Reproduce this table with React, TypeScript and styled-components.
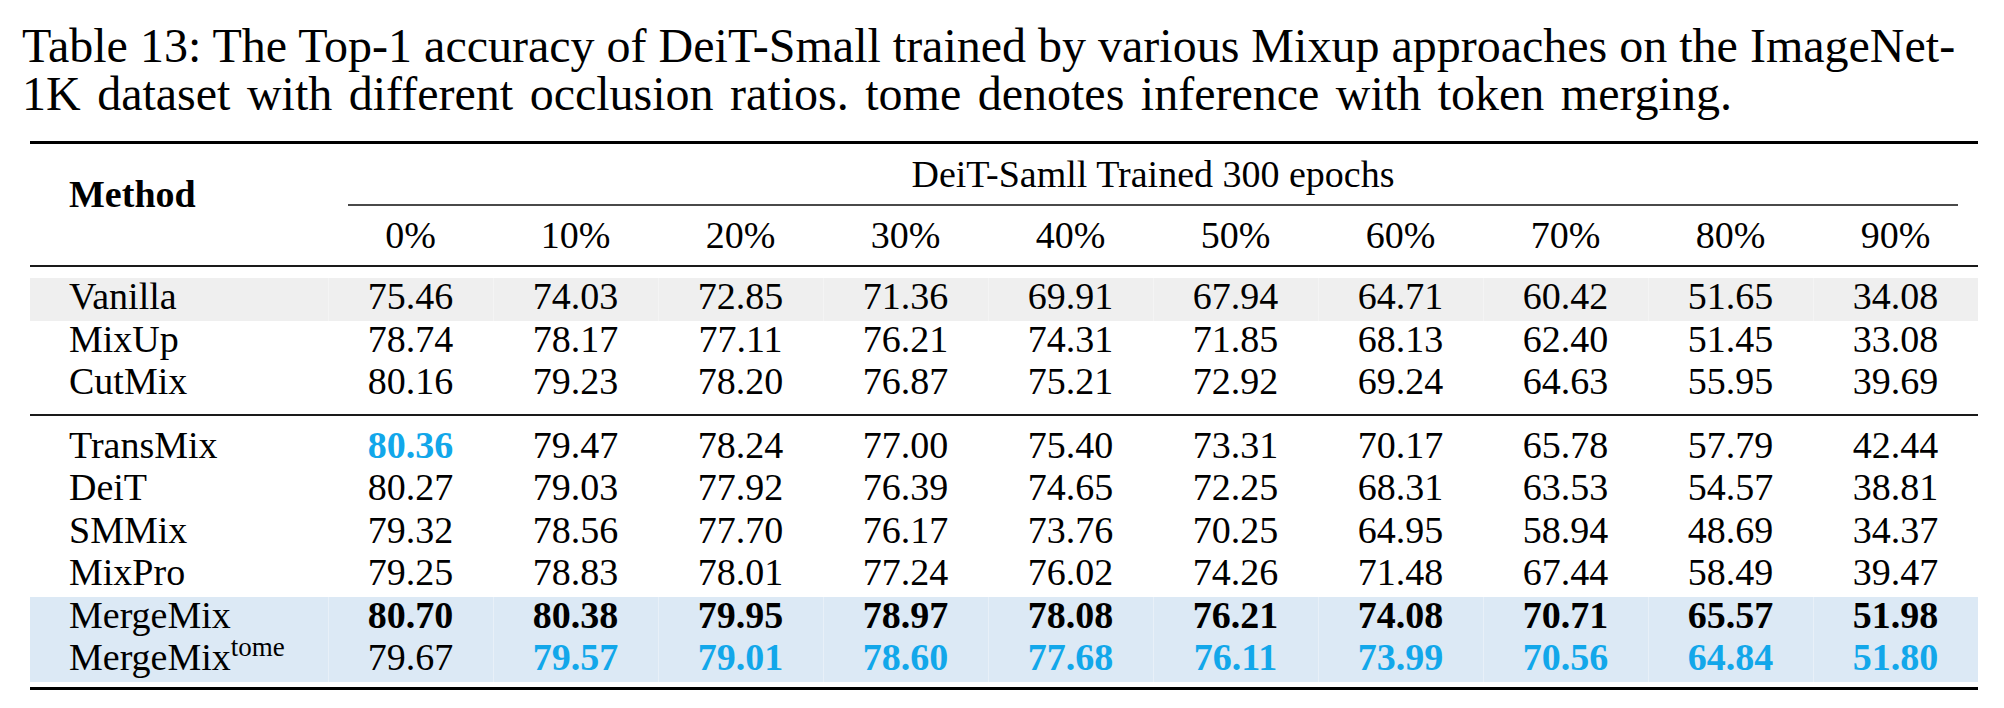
import React from "react";
import styled, { createGlobalStyle } from "styled-components";

const GlobalStyle = createGlobalStyle`
  html, body {
    margin: 0;
    padding: 0;
    background: #ffffff;
  }
  body {
    font-family: "Liberation Serif", "Times New Roman", serif;
    color: #000000;
  }
`;

const Page = styled.div`
  width: 2004px;
  height: 708px;
  overflow: hidden;
  padding-top: 22px;
  box-sizing: border-box;
`;

const Caption = styled.div`
  width: 1933px;
  margin-left: 22px;
  font-size: 48px;
  line-height: 48px;
`;

const CaptionLine = styled.div<{ $justify?: boolean; $spacing?: number }>`
  white-space: nowrap;
  word-spacing: ${({ $spacing }) => $spacing || 0}px;
  text-align: ${({ $justify }) => ($justify ? "justify" : "left")};
  text-align-last: ${({ $justify }) => ($justify ? "justify" : "left")};
`;

const Table = styled.div`
  width: 1948px;
  margin: 23px 0 0 30px;
  font-size: 38px;
`;

const Rule = styled.div<{ $h: number; $color?: string }>`
  height: ${({ $h }) => $h}px;
  background: ${({ $color }) => $color || "#000"};
`;

const Gap = styled.div<{ $h: number }>`
  height: ${({ $h }) => $h}px;
`;

const Header = styled.div`
  display: grid;
  grid-template-columns: 298px 1650px;
  grid-template-rows: 60px 2px 59px;
`;

const MethodHead = styled.div`
  grid-row: 1 / 4;
  font-weight: bold;
  line-height: 42px;
  padding: 29px 0 0 39px;
`;

const GroupHead = styled.div`
  text-align: center;
  line-height: 60px;
`;

const CMidRule = styled.div`
  grid-column: 2;
  margin: 0 20px;
  background: #4a4a4a;
`;

const Cols = styled.div`
  grid-column: 2;
  display: grid;
  grid-template-columns: repeat(10, 165px);
  line-height: 59px;
  text-align: center;
`;

const Row = styled.div<{ $bg?: string }>`
  display: grid;
  grid-template-columns: 298px repeat(10, 165px);
  height: 42.5px;
  line-height: 36px;
  background: ${({ $bg }) => $bg || "transparent"};
`;

const NameCell = styled.div`
  padding-left: 39px;
  white-space: nowrap;
`;

const Cell = styled.div<{ $bold?: boolean; $blue?: boolean; $shaded?: boolean }>`
  text-align: center;
  font-weight: ${({ $bold }) => ($bold ? "bold" : "normal")};
  color: ${({ $blue }) => ($blue ? "#12a7ea" : "#000")};
  box-shadow: ${({ $shaded }) =>
    $shaded ? "inset 1px 0 0 rgba(255,255,255,0.35)" : "none"};
`;

const Sup = styled.sup`
  font-size: 27px;
  line-height: 0;
  vertical-align: 14px;
`;

type Style = "n" | "b" | "c";

type Line = {
  name: React.ReactNode;
  values: string[];
  styles?: Style[];
  bg?: string;
};

const GRAY = "#efefef";
const BLUE = "#dce9f5";

const top: Line[] = [
  {
    name: "Vanilla",
    values: ["75.46", "74.03", "72.85", "71.36", "69.91", "67.94", "64.71", "60.42", "51.65", "34.08"],
    bg: GRAY,
  },
  {
    name: "MixUp",
    values: ["78.74", "78.17", "77.11", "76.21", "74.31", "71.85", "68.13", "62.40", "51.45", "33.08"],
  },
  {
    name: "CutMix",
    values: ["80.16", "79.23", "78.20", "76.87", "75.21", "72.92", "69.24", "64.63", "55.95", "39.69"],
  },
];

const bottom: Line[] = [
  {
    name: "TransMix",
    values: ["80.36", "79.47", "78.24", "77.00", "75.40", "73.31", "70.17", "65.78", "57.79", "42.44"],
    styles: ["c"],
  },
  {
    name: "DeiT",
    values: ["80.27", "79.03", "77.92", "76.39", "74.65", "72.25", "68.31", "63.53", "54.57", "38.81"],
  },
  {
    name: "SMMix",
    values: ["79.32", "78.56", "77.70", "76.17", "73.76", "70.25", "64.95", "58.94", "48.69", "34.37"],
  },
  {
    name: "MixPro",
    values: ["79.25", "78.83", "78.01", "77.24", "76.02", "74.26", "71.48", "67.44", "58.49", "39.47"],
  },
  {
    name: "MergeMix",
    values: ["80.70", "80.38", "79.95", "78.97", "78.08", "76.21", "74.08", "70.71", "65.57", "51.98"],
    styles: ["b", "b", "b", "b", "b", "b", "b", "b", "b", "b"],
    bg: BLUE,
  },
  {
    name: (
      <>
        MergeMix<Sup>tome</Sup>
      </>
    ),
    values: ["79.67", "79.57", "79.01", "78.60", "77.68", "76.11", "73.99", "70.56", "64.84", "51.80"],
    styles: ["n", "c", "c", "c", "c", "c", "c", "c", "c", "c"],
    bg: BLUE,
  },
];

const ratios = ["0%", "10%", "20%", "30%", "40%", "50%", "60%", "70%", "80%", "90%"];

const DataRow = ({ line }: { line: Line }) => (
  <Row $bg={line.bg}>
    <NameCell>{line.name}</NameCell>
    {line.values.map((v, i) => {
      const s = line.styles?.[i] || "n";
      return (
        <Cell key={i} $bold={s !== "n"} $blue={s === "c"} $shaded={!!line.bg}>
          {v}
        </Cell>
      );
    })}
  </Row>
);

export default function App() {
  return (
    <Page>
      <GlobalStyle />
      <Caption>
        <CaptionLine $justify>
          Table 13: The Top-1 accuracy of DeiT-Small trained by various Mixup approaches on the ImageNet-
        </CaptionLine>
        <CaptionLine $spacing={4.5}>
          1K dataset with different occlusion ratios. tome denotes inference with token merging.
        </CaptionLine>
      </Caption>

      <Table>
        <Rule $h={3} />
        <Header>
          <MethodHead>Method</MethodHead>
          <GroupHead>DeiT-Samll Trained 300 epochs</GroupHead>
          <CMidRule />
          <Cols>
            {ratios.map((r) => (
              <div key={r}>{r}</div>
            ))}
          </Cols>
        </Header>
        <Rule $h={2} $color="#1a1a1a" />
        <Gap $h={11} />
        {top.map((l, i) => (
          <DataRow key={i} line={l} />
        ))}
        <Gap $h={8} />
        <Rule $h={2} $color="#1a1a1a" />
        <Gap $h={11} />
        {bottom.map((l, i) => (
          <DataRow key={i} line={l} />
        ))}
        <Gap $h={5} />
        <Rule $h={3} />
      </Table>
    </Page>
  );
}
